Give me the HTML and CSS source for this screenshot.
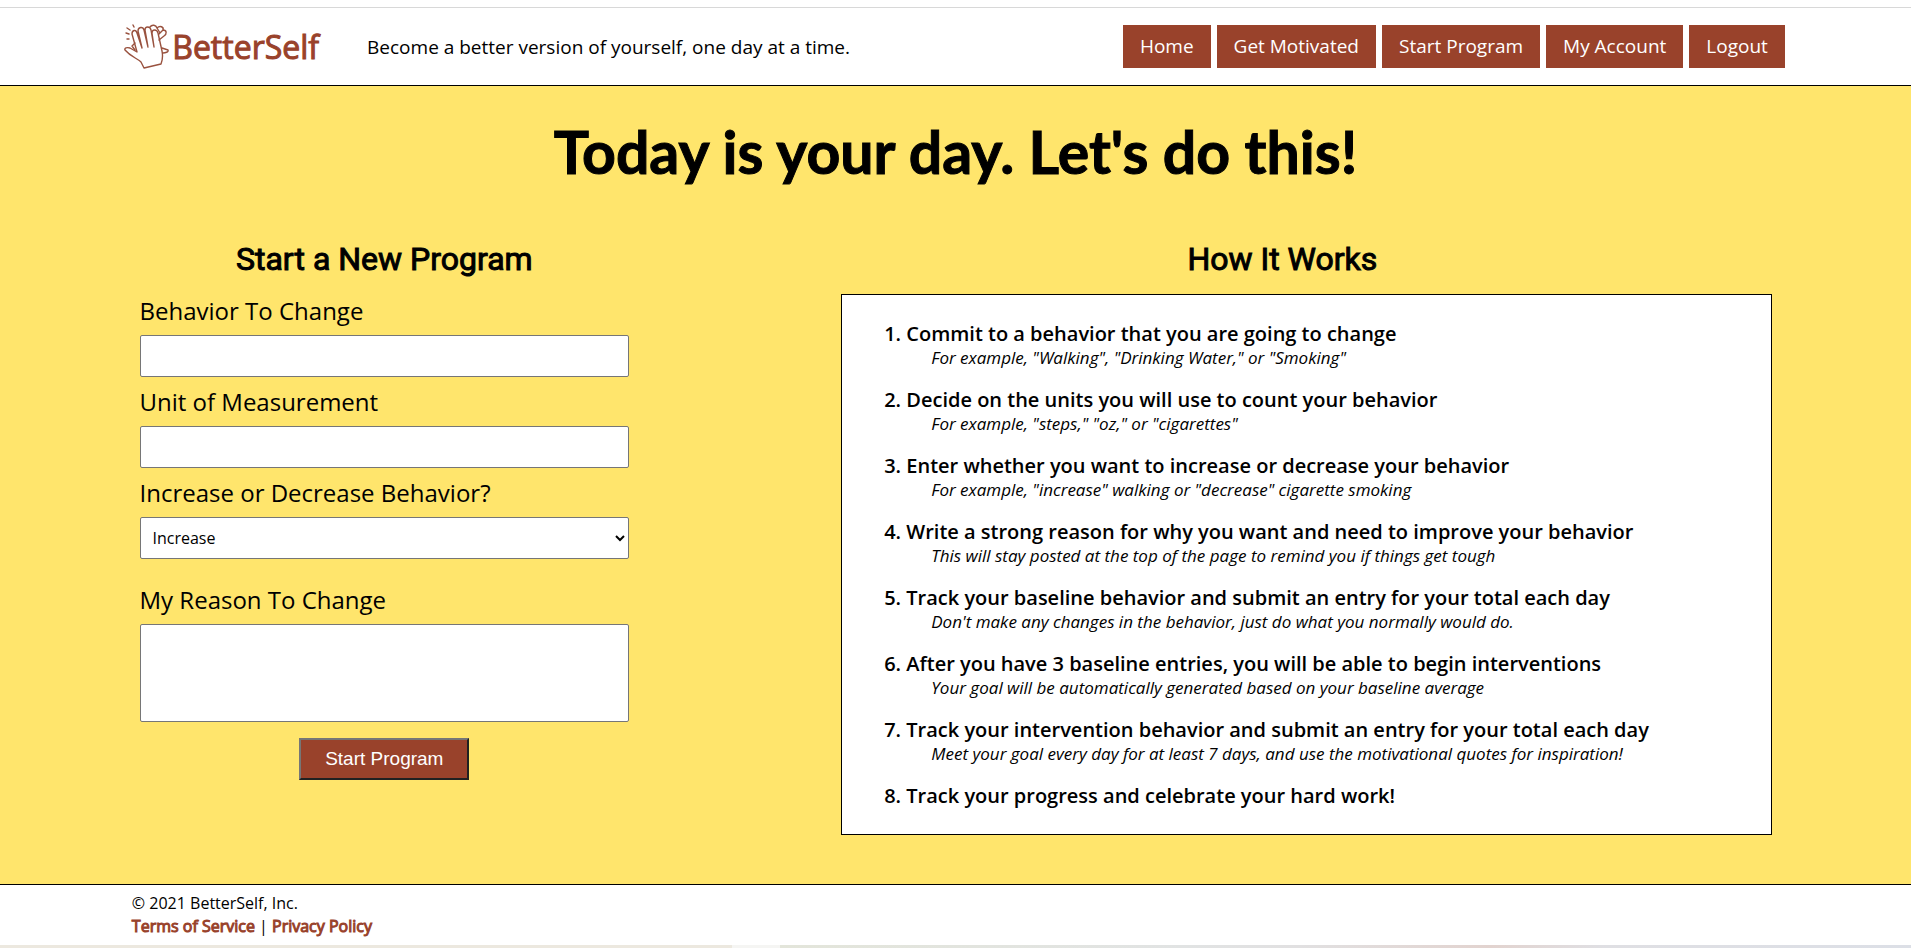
FILE: index.html
```html
<!DOCTYPE html>
<html lang="en">
<head>
<meta charset="utf-8">
<title>BetterSelf</title>
<link rel="stylesheet" href="styles.css">
</head>
<body>
<header class="site-header">
  <a class="logo" href="#">
    <svg class="logo-mark" viewBox="0 0 46 46" aria-hidden="true">
      <g class="logo-strokes">
        <path d="M20 44 17 38C13 34 7 33 1 26C0 24 3 23 6 24L13 28L8 10C8 6 12 5 13 9L18 24L14 7C14 3 19 2 20 6L24 23L21 6C21 2 26 2 27 6L30 23L28 9C28 5 33 5 34 9L38 27C39 32 39 35 37 40Z"/>
        <path d="M26 3C28 0 32 1 33 4C36 1 40 3 39 6C43 6 43 10 40 12L35 16M33 4 36 9M39 6 35 10M11 19 8 22 11 26M38 24 44 26C45 28 41 29 39 29"/>
        <path d="M3 15H5M2 9 5 10M3 4 6 6M9 1 10 3"/>
      </g>
    </svg>
    <span class="logo-name">BetterSelf</span>
  </a>
  <p class="tagline">Become a better version of yourself, one day at a time.</p>
  <nav class="nav">
    <a href="#">Home</a>
    <a href="#">Get Motivated</a>
    <a href="#">Start Program</a>
    <a href="#">My Account</a>
    <a href="#">Logout</a>
  </nav>
</header>
<main class="main">
  <h1 class="title">Today is your day. Let's do this!</h1>
  <div class="columns">
    <section class="program">
      <h2 class="heading">Start a New Program</h2>
      <form class="form">
        <div class="field">
          <label for="behavior">Behavior To Change</label>
          <input class="control" id="behavior" type="text">
        </div>
        <div class="field">
          <label for="unit">Unit of Measurement</label>
          <input class="control" id="unit" type="text">
        </div>
        <div class="field field-direction">
          <label for="direction">Increase or Decrease Behavior?</label>
          <select class="control" id="direction">
            <option>Increase</option>
            <option>Decrease</option>
          </select>
        </div>
        <div class="field">
          <label for="reason">My Reason To Change</label>
          <textarea class="control control-tall" id="reason"></textarea>
        </div>
        <button class="submit" type="button">Start Program</button>
      </form>
    </section>
    <section class="guide">
      <h2 class="heading guide-heading">How It Works</h2>
      <ol class="steps">
        <li>Commit to a behavior that you are going to change
          <p class="hint">For example, "Walking", "Drinking Water," or "Smoking"</p></li>
        <li>Decide on the units you will use to count your behavior
          <p class="hint">For example, "steps," "oz," or "cigarettes"</p></li>
        <li>Enter whether you want to increase or decrease your behavior
          <p class="hint">For example, "increase" walking or "decrease" cigarette smoking</p></li>
        <li>Write a strong reason for why you want and need to improve your behavior
          <p class="hint">This will stay posted at the top of the page to remind you if things get tough</p></li>
        <li>Track your baseline behavior and submit an entry for your total each day
          <p class="hint">Don't make any changes in the behavior, just do what you normally would do.</p></li>
        <li>After you have 3 baseline entries, you will be able to begin interventions
          <p class="hint">Your goal will be automatically generated based on your baseline average</p></li>
        <li>Track your intervention behavior and submit an entry for your total each day
          <p class="hint">Meet your goal every day for at least 7 days, and use the motivational quotes for inspiration!</p></li>
        <li>Track your progress and celebrate your hard work!</li>
      </ol>
    </section>
  </div>
</main>
<footer class="footer">
  <p>© 2021 BetterSelf, Inc.</p>
  <p><a href="#">Terms of Service</a> | <a href="#">Privacy Policy</a></p>
</footer>
<div class="strip"></div>
</body>
</html>
```
FILE: styles.css
```css
* {
  box-sizing: border-box;
}

body {
  margin: 0;
  min-height: 100vh;
  display: flex;
  flex-direction: column;
  padding-top: 7px;
  background: #fff;
  color: #000;
  font-family: "Open Sans", "Liberation Sans", sans-serif;
  font-size: 16px;
}

h1, h2, p {
  margin: 0;
}

.site-header {
  display: flex;
  align-items: center;
  height: 79px;
  padding: 0 6.6% 0 6.5%;
  border-top: 1px solid #d8d8d8;
  border-bottom: 1px solid #000;
}

.logo {
  display: flex;
  align-items: center;
  gap: 2px;
  color: #99422b;
  text-decoration: none;
}

.logo-mark {
  width: 46px;
  height: 46px;
}

.logo-strokes {
  fill: none;
  stroke: #99523f;
  stroke-width: 1.4;
  stroke-linecap: round;
  stroke-linejoin: round;
}

.logo-name {
  font-size: 32px;
  line-height: 44px;
  -webkit-text-stroke: 1px #99422b;
}

.tagline {
  margin-left: 48px;
  font-size: 19px;
}

.nav {
  display: flex;
  gap: 6px;
  margin-left: auto;
}

.nav a {
  padding: 8px 17px;
  background: #99422b;
  color: #fff;
  font-size: 19px;
  line-height: 27px;
  text-decoration: none;
}

.main {
  flex: 1;
  padding: 32px 7.3% 48px;
  background: #ffe56c;
}

.title {
  font-family: Lato, "Open Sans", sans-serif;
  font-size: 59px;
  line-height: 68px;
  text-align: center;
  -webkit-text-stroke: 1px #000;
}

.columns {
  display: flex;
  justify-content: space-between;
  margin-top: 52px;
}

.program {
  width: 30%;
}

.guide {
  width: 57%;
}

.heading {
  font-family: Roboto, "Liberation Sans", sans-serif;
  font-size: 32px;
  font-weight: 400;
  line-height: 42px;
  text-align: center;
  -webkit-text-stroke: 1px #000;
}

.guide-heading {
  padding-right: 48px;
}

.form {
  display: flex;
  flex-direction: column;
  gap: 8px;
  padding-top: 14px;
}

.field {
  display: flex;
  flex-direction: column;
  gap: 8px;
}

.field label {
  font-size: 24px;
  line-height: 33px;
}

.field-direction {
  margin-bottom: 16px;
}

.control {
  width: 100%;
  height: 42px;
  padding: 8px;
  border: 1px solid #767676;
  border-radius: 2px;
  background: #fff;
  color: #000;
  font-family: inherit;
  font-size: 16px;
}

.control-tall {
  height: 98px;
  resize: none;
}

.submit {
  align-self: center;
  height: 42px;
  margin-top: 8px;
  padding: 0 24px;
  border: 2px outset #767676;
  background: #99422b;
  color: #fff;
  font-family: "Liberation Sans", sans-serif;
  font-size: 19px;
}

.steps {
  display: flex;
  flex-direction: column;
  gap: 18px;
  margin: 14px 0 0;
  padding: 25px 24px 24px 64px;
  border: 1px solid #000;
  background: #fff;
  font-size: 20px;
  font-weight: 600;
  line-height: 28px;
}

.hint {
  padding-left: 25px;
  font-size: 17px;
  font-style: italic;
  font-weight: 400;
  line-height: 20px;
}

.footer {
  padding: 7px 6.9%;
  border-top: 1px solid #000;
  line-height: 23px;
}

.footer a {
  color: #99422b;
  text-decoration: none;
  -webkit-text-stroke: 1px #99422b;
}

.strip {
  height: 3px;
  background: linear-gradient(90deg, #ece8df 0 38.3%, #f5f5f3 38.3% 40.8%, #e3e5da 40.8%, #e1e3e3 62%, #e1e0e1 68%, #e2d3cf 78%, #dfdfe3 84%, #dcdfe6);
}
```
